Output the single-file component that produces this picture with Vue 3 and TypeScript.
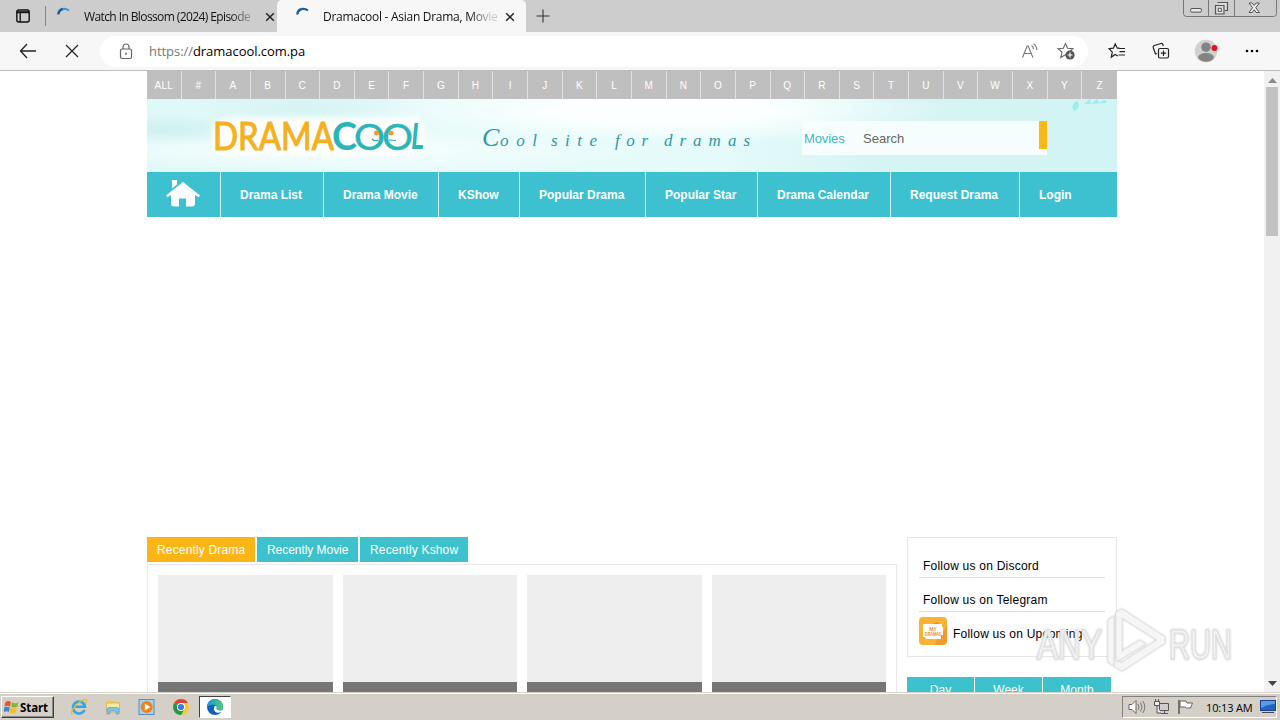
<script setup lang="ts">
interface NavItem { label: string }
interface Word { text: string; x: number; width: number; big?: boolean }

const letters: string[] = ['ALL', '#', ...'ABCDEFGHIJKLMNOPQRSTUVWXYZ'.split('')]
const nav: NavItem[] = [
  { label: 'Drama List' },
  { label: 'Drama Movie' },
  { label: 'KShow' },
  { label: 'Popular Drama' },
  { label: 'Popular Star' },
  { label: 'Drama Calendar' },
  { label: 'Request Drama' },
  { label: 'Login' },
]
const slogan: Word[] = [
  { text: 'C', x: 0, width: 14, big: true },
  { text: 'ool', x: 18, width: 37 },
  { text: 'site', x: 69, width: 46 },
  { text: 'for', x: 133, width: 33 },
  { text: 'dramas', x: 182, width: 86 },
]
const recent: string[] = ['Recently Drama', 'Recently Movie', 'Recently Kshow']
const periods: string[] = ['Day', 'Week', 'Month']
</script>

<template>
  <div class="screen">
    <header class="tabstrip">
      <svg class="tab-menu" width="16" height="16" viewBox="0 0 16 16">
        <rect x="1.8" y="2" width="12.4" height="12" rx="2" fill="none" stroke="#111" stroke-width="1.4" />
        <path d="M2 3.2h12v2H2z" fill="#111" /><path d="M5.200 5v9" stroke="#111" stroke-width="1.3" />
      </svg>
      <i class="strip-sep"></i>
      <div class="tab idle">
        <svg class="spinner" width="14" height="14" viewBox="0 0 14 14"><path d="M1.3 7.5A6 6 0 0 1 6 2" fill="none" stroke="#1d5c96" stroke-width="2.4" /><path d="M6 2Q9 1.2 12 3.5" fill="none" stroke="#3d9ad6" stroke-width="2.2" /></svg>
        <span class="tab-title t1">Watch In Blossom (2024) Episode</span>
        <svg class="close" width="10" height="10" viewBox="0 0 10 10"><path d="M1.2 1.2l7.6 7.6M8.8 1.2L1.2 8.8" stroke="#222" stroke-width="1.5" /></svg>
      </div>
      <div class="tab active">
        <svg class="spinner" width="14" height="14" viewBox="0 0 14 14"><path d="M1.3 7.5A6 6 0 0 1 6 2" fill="none" stroke="#1d5c96" stroke-width="2.4" /><path d="M6 2Q9 1.2 12 3.5" fill="none" stroke="#1d5c96" stroke-width="2.2" /></svg>
        <span class="tab-title t2">Dramacool - Asian Drama, Movie</span>
        <svg class="close" width="10" height="10" viewBox="0 0 10 10"><path d="M1.2 1.2l7.6 7.6M8.8 1.2L1.2 8.8" stroke="#222" stroke-width="1.5" /></svg>
      </div>
      <svg class="plus" width="14" height="14" viewBox="0 0 14 14"><path d="M7 .5v13M.5 7h13" stroke="#333" stroke-width="1.1" /></svg>
      <svg class="winbtns" width="94" height="17" viewBox="0 0 94 17">
        <path d="M.5 0V13.5Q.5 16.5 3.5 16.5H90.5Q93.5 16.5 93.5 13.5V0M25.5 0V16.5M51.5 0V16.5" fill="none" stroke="#777" />
        <rect x="7.500" y="8.500" width="11" height="3.6" rx="1.5" fill="#e8e8e8" stroke="#555" />
        <path d="M34.500 2.500h10v8h-2.500M32.500 5.500h8.500v8.500h-8.500z" fill="#ddd" stroke="#555" stroke-width="1.2" />
        <rect x="35.300" y="8.300" width="3" height="3" fill="#fff" stroke="#555" />
        <path d="M66 3h3.200l2 2.500 2-2.500h3.200l-3.600 4.700 3.600 4.800h-3.200l-2-2.700-2 2.700H66l3.600-4.800z" fill="#eee" stroke="#555" />
      </svg>
    </header>

    <div class="toolbar">
      <svg class="back" width="18" height="18" viewBox="0 0 18 18"><path d="M8 2L1.500 9 8 16M1.500 9H17" fill="none" stroke="#222" stroke-width="1.3" /></svg>
      <svg class="stop" width="14" height="14" viewBox="0 0 14 14"><path d="M1 1l12 12M13 1L1 13" fill="none" stroke="#222" stroke-width="1.2" /></svg>
      <div class="address">
        <svg class="lock" width="14" height="17" viewBox="0 0 14 17"><rect x="1.500" y="6" width="11" height="9.500" rx="1.500" fill="none" stroke="#666" stroke-width="1.200" /><path d="M4 6V4a3 3 0 0 1 6 0v2" fill="none" stroke="#666" stroke-width="1.200" /><circle cx="7" cy="10.800" r="1" fill="#666" /></svg>
        <span class="url"><span class="scheme">https://</span>dramacool.com.pa</span>
        <svg class="read" width="18" height="17" viewBox="0 0 18 17"><path d="M1.500 14.500L6.200 3h1l4.700 11.500M3.300 10.500h7M10.500 2.500q2 1 2 3.500M12.500 1q3.500 2 3.200 6" fill="none" stroke="#777" stroke-width="1.100" /></svg>
        <svg class="fav" width="18" height="18" viewBox="0 0 18 18"><path d="M8.500 1.500l2 4.700 5.400.5-3.800 3.300 1 5.500-4.600-2.900-4.700 2.900 1.200-5.500L1 6.700l5.300-.5z" fill="none" stroke="#666" stroke-width="1.100" /><circle cx="13" cy="13" r="4.600" fill="#555" /><path d="M13 10.500v5M10.500 13h5" stroke="#fff" stroke-width="1.200" /></svg>
      </div>
      <svg class="favs" width="18" height="18" viewBox="0 0 18 18"><path d="M11.500 6.200H9.300L7.200 2 5.400 6.200 1 6.700l3.300 3.400-1 5L7.200 12.500l2.600 1.600M11 6.500h6M11.500 9.700H17M10.500 13H17" fill="none" stroke="#222" stroke-width="1.200" /></svg>
      <svg class="coll" width="18" height="18" viewBox="0 0 18 18"><path d="M5 11.500L3.500 12 1.200 5.500Q.8 4 2.300 3.500L9 1.500q1.300-.3 1.800 1l.5 1.500" fill="none" stroke="#222" stroke-width="1.200" /><rect x="6.500" y="6.500" width="10" height="9.500" rx="1.500" fill="none" stroke="#222" stroke-width="1.200" /><path d="M11.500 8.500v5.500M8.800 11.200h5.400" stroke="#222" stroke-width="1.200" /></svg>
      <svg class="avatar" width="24" height="24" viewBox="0 0 24 24"><circle cx="12" cy="12" r="11.300" fill="#d1d1cf" /><circle cx="12" cy="8.200" r="4.800" fill="#848484" /><path d="M4 18.500q1-4.500 8-4.500t8 4.500q-2.500 4.300-8 4.300t-8-4.300" fill="#848484" /><circle cx="20.500" cy="9" r="3" fill="#e21020" /></svg>
      <svg class="dots" width="14" height="4" viewBox="0 0 14 4"><circle cx="2" cy="2" r="1.300" /><circle cx="7" cy="2" r="1.300" /><circle cx="12" cy="2" r="1.300" /></svg>
    </div>

    <div class="viewport">
      <main class="site">
        <nav class="alphabet"><a v-for="l in letters" :key="l">{{ l }}</a></nav>
        <div class="banner">
          <svg class="logo" width="224" height="52" viewBox="0 0 224 52">
            <g class="logo-halo"><rect x="4" y="8" width="212" height="37" rx="12" /></g>
            <g class="logo-text">
              <text x="4" y="40" textLength="121" lengthAdjust="spacingAndGlyphs" class="drama">DRAMA</text>
              <text x="123" y="39.800" textLength="25" lengthAdjust="spacingAndGlyphs" class="cool">C</text>
              <text x="145" y="39.800" textLength="31" lengthAdjust="spacingAndGlyphs" class="cool oo">O</text>
              <text x="173" y="39.800" textLength="31" lengthAdjust="spacingAndGlyphs" class="cool oo">O</text>
              <text x="202" y="39" textLength="13" lengthAdjust="spacingAndGlyphs" class="cool ell">L</text>
            </g>
            <circle cx="167.500" cy="23" r="2.500" fill="#f39a2a" /><circle cx="182" cy="23" r="2.500" fill="#f39a2a" />
            <path d="M163 29q3 3 6 1M180 30l7 .5" fill="none" stroke="#2b9fb5" stroke-width="1.100" />
          </svg>
          <svg class="tagline" width="272" height="40" viewBox="0 0 272 40">
            <text v-for="w in slogan" :key="w.text" :x="w.x" y="28" :textLength="w.width" :class="{ big: w.big }">{{ w.text }}</text>
          </svg>
          <form class="search">
            <span class="kind">Movies</span><span class="query">Search</span><i></i>
          </form>
          <svg class="leaves" width="44" height="16" viewBox="0 0 44 16"><path d="M5 4q4-4 5 1 0 5-5 7-3-4 0-8M15 5l6-5 1 5 6-5 2 4 6-3 2 3" fill="#8eeaea" opacity=".8" /></svg>
        </div>
        <nav class="mainnav">
          <a class="home"><svg width="34" height="28" viewBox="0 0 34 28"><path d="M17 2L0 15.500l1.500 1.800L5 15V24q0 2.500 3 2.500h5v-8h7v8h6q3 0 3-3V15l3.500 2.300L34 15.500zM6 8.500V0h5v4.500z" fill="#fff" /></svg></a>
          <a v-for="n in nav" :key="n.label">{{ n.label }}</a>
        </nav>
        <div class="columns">
          <section class="left">
            <div class="recent"><a v-for="(r, i) in recent" :key="r" :class="{ on: i === 0 }">{{ r }}</a></div>
            <div class="grid"><div v-for="n in 4" :key="n" class="card"><b></b></div></div>
          </section>
          <aside class="right">
            <div class="follow">
              <p>Follow us on Discord</p>
              <p>Follow us on Telegram</p>
              <p class="up">
                <svg width="28" height="28" viewBox="0 0 28 28"><rect width="28" height="28" rx="4" fill="#f9b233" /><path d="M28 9L15 27.500h9q4 0 4-4z" fill="#f39a2c" /><path d="M14 7q3-3 6-1l2 3H14" fill="#f08d24" /><path d="M4 7h19v3h1v8h-2v4H7l-1-2H4z" fill="#fff" /><text x="14" y="13.500" class="tiny">MY</text><text x="14" y="18.500" class="tiny" textLength="16" lengthAdjust="spacingAndGlyphs">DRAMAS</text></svg>
                Follow us on Upcoming
              </p>
            </div>
            <div class="periods"><a v-for="p in periods" :key="p">{{ p }}</a></div>
          </aside>
        </div>
      </main>
      <div class="scrollbar">
        <svg width="9" height="5" viewBox="0 0 9 5"><path d="M0 5L4.500 0 9 5z" fill="#8a8a8a" /></svg>
        <i></i>
        <svg class="down" width="9" height="5" viewBox="0 0 9 5"><path d="M0 0L4.500 5 9 0z" fill="#444" /></svg>
      </div>
    </div>

    <footer class="taskbar">
      <div class="start">
        <svg width="15" height="14" viewBox="0 0 15 14"><path d="M1.500 2q3-2 5.500 0L6 6.500Q3.500 5 .5 6.500z" fill="#e8542c" /><path d="M8 2.300q3 1.700 6.500 0l-1.300 4.500q-3 1.500-6 0z" fill="#7cb83b" /><path d="M.3 7.500q3-1.500 5.500 0l-1 4.500Q2.500 10.500-.5 12z" fill="#3b86cf" /><path d="M6.700 7.800q3 1.600 6.200 0l-1.300 4.700q-3 1.500-6 0z" fill="#f7bb26" /></svg>
        <span>Start</span>
      </div>
      <svg class="ie" width="18" height="18" viewBox="0 0 18 18"><path d="M14.500 12A6 6 0 1 1 15 8.800H5" fill="none" stroke="#35a5e0" stroke-width="2.600" /><path d="M2.500 16.500Q-.5 15 5 8.500 12 1 16 1.500q1.500.8 0 4" fill="none" stroke="#e9b92f" stroke-width="1.200" /></svg>
      <svg class="folder" width="18" height="18" viewBox="0 0 18 18"><path d="M1.500 3.500L3 2h5l1 1.500h6V9H1.500z" fill="#e9cf70" /><path d="M2.500 5h13v9h-13z" fill="#f8e9a1" stroke="#c9ab52" stroke-width=".7" /><path d="M3 16v-4.500Q3 9.500 5 9.500h8q2 0 2 2V16h-3v-3H6v3z" fill="#7fc3e6" stroke="#4c99c8" stroke-width=".6" /></svg>
      <svg class="wmp" width="18" height="18" viewBox="0 0 18 18"><rect x="1" y="1.500" width="15" height="15" fill="#a9d1ee" stroke="#4d91c7" /><circle cx="8.700" cy="9" r="6" fill="#f08218" /><path d="M6.800 5.500l5.500 3.500-5.500 3.500z" fill="#fff" /></svg>
      <svg class="chrome" width="18" height="18" viewBox="0 0 18 18"><circle cx="9" cy="9" r="8" fill="#f7c92e" /><path d="M9 9L2.100 5A8 8 0 0 1 16 5H9z" fill="#dc4437" /><path d="M2.100 5A8 8 0 0 0 9 17l3.500-6L9 9z" fill="#26964d" /><circle cx="9" cy="9" r="4" fill="#fff" /><circle cx="9" cy="9" r="3.100" fill="#3b7be8" /></svg>
      <div class="edge">
        <svg width="18" height="18" viewBox="0 0 18 18"><defs><linearGradient id="eg" x1="0" y1="0" x2="1" y2="0"><stop offset="0" stop-color="#1b93dc" /><stop offset="1" stop-color="#4fd16c" /></linearGradient></defs><circle cx="9" cy="9" r="8" fill="#0c62b8" /><path d="M1 9.500A8 8 0 0 1 17 9q0 3-3.500 3.200-3.500 0-3-2Q11 7 7.500 6.500 2.500 6.500 1 9.500" fill="url(#eg)" /><path d="M10.700 9q-.8 1.500.3 2.700 2.500 1.300 6 .3l-1 1.700q-4 2.300-7.200-.2Q7 11 8.500 8.300q1.500-.8 2.200.7" fill="#fff" /></svg>
      </div>
      <div class="tray">
        <svg class="snd" width="18" height="16" viewBox="0 0 18 16"><path d="M1 5.500h3L8 1.500v13L4 10.500H1z" fill="#fff" stroke="#666" /><path d="M10 5q2 3 0 6M12.500 3.500q3 4.500 0 9M14.800 2q4 6 0 12" fill="none" stroke="#777" /></svg>
        <svg class="net" width="18" height="16" viewBox="0 0 18 16"><path d="M6.500 4.500h9v7h-9zM8 14.500h7M11.500 12v2" fill="#ccc" stroke="#555" /><path d="M1.500 2.500h5v4h-5zM2.500 0v2M5.500 0v2M4 7v7h4" fill="#eee" stroke="#555" /></svg>
        <svg class="flag" width="17" height="16" viewBox="0 0 17 16"><path d="M2 1v14" stroke="#555" stroke-width="1.500" /><path d="M3 2h6l1 2h5.500l-2 5H9.500L8 8H3z" fill="#fff" stroke="#666" /></svg>
        <time>10:13 AM</time>
        <svg class="mon" width="16" height="14" viewBox="0 0 16 14"><rect x=".5" y=".5" width="15" height="10" fill="#2363c4" stroke="#17418a" /><path d="M1 1h14v3Q7 4 1 8z" fill="#5b9be8" /><path d="M2 12.500h12" stroke="#445" /></svg>
      </div>
    </footer>

    <svg class="watermark" width="200" height="68" viewBox="0 0 200 68">
      <g class="wm">
        <text x="3" y="53" textLength="65" lengthAdjust="spacingAndGlyphs">ANY</text>
        <text x="135" y="53" textLength="63" lengthAdjust="spacingAndGlyphs">RUN</text>
        <path d="M74 14l6-4v50l-6-4zM82 6l6-3 43 28v6L88 65l-8-5v-8l7 5 36-23L88 12v33l18-11 6 4-30 18z" />
      </g>
    </svg>
  </div>
</template>

<style>
html, body { margin: 0; overflow: hidden; }
</style>
<style scoped>
* { box-sizing: border-box; }
svg { display: block; flex: none; }
.screen { position: relative; width: 1280px; height: 720px; overflow: hidden; display: flex; flex-direction: column; background: #fff; font-family: "Liberation Sans", Arial, sans-serif; white-space: nowrap; }
.tabstrip { height: 32px; flex: none; background: #cdcdcd; display: flex; align-items: center; font: 12px "Open Sans", sans-serif; color: #111; }
.tab-menu { margin-left: 15px; }
.strip-sep { width: 1px; height: 20px; background: #888; margin-left: 14px; }
.tab { height: 32px; display: flex; align-items: center; flex: none; }
.idle { width: 231px; padding-left: 11px; }
.active { width: 249px; padding-left: 19px; background: #f7f7f7; border-radius: 5px 5px 0 0; }
.spinner { margin-top: -4px; }
.tab-title { flex: none; width: 174px; margin-left: 13px; overflow: hidden; -webkit-mask-image: linear-gradient(90deg, #000 146px, rgba(0,0,0,.2) 168px); mask-image: linear-gradient(90deg, #000 146px, rgba(0,0,0,.2) 168px); }
.t1 { letter-spacing: -.6px; }
.t2 { letter-spacing: -.28px; }
.close { margin: 1px 0 0 8px; }
.idle .close { margin-left: 7px; }
.plus { margin-left: 10px; }
.winbtns { margin-left: auto; margin-right: 3px; align-self: flex-start; }
.toolbar { height: 39px; flex: none; background: #f7f7f7; border-bottom: 1px solid #bdbdbd; display: flex; align-items: center; }
.back { margin-left: 19px; }
.stop { margin-left: 28px; }
.address { width: 988px; height: 31px; margin-left: 21px; border-radius: 16px; background: #fff; display: flex; align-items: center; padding-left: 19px; }
.url { margin-left: 16px; width: 200px; font: 13px "Open Sans", sans-serif; letter-spacing: -.05px; color: #000; }
.scheme { color: #777; }
.read { margin-left: 672px; }
.fav { margin-left: 18px; }
.favs { margin-left: 20px; }
.coll { margin-left: 26px; }
.avatar { margin-left: 24px; }
.dots { margin-left: 27px; }
.viewport { height: 621px; flex: none; display: flex; overflow: hidden; }
.site { width: 970px; margin-left: 147px; flex: none; }
.alphabet { height: 28px; display: grid; grid-template-columns: repeat(28, 1fr); background: #bfbfbf; color: #fff; font-size: 10px; letter-spacing: .3px; line-height: 29px; text-align: center; }
.alphabet a { border-right: 1px solid #e2e2e2; }
.alphabet a:last-child { border: 0; }
.banner { height: 73px; position: relative; display: flex; background: radial-gradient(ellipse 9% 22% at 2% 42%, rgba(190,232,232,.5), transparent), radial-gradient(ellipse 12% 30% at 16% 12%, rgba(205,240,240,.6), transparent), radial-gradient(ellipse at 20% 70%, #f3fdfd 0 8%, transparent 32%), radial-gradient(ellipse at 53% 15%, #fbffff 0 15%, transparent 40%), linear-gradient(90deg, #dff8f8 0, #e5fafa 30%, #e5fafa 60%, #d6f4f4 75%, #d3f4f4); }
.logo { margin: 11px 0 0 62px; }
.logo-halo { fill: #fff; filter: blur(3px); }
.drama { font: 400 38px Lato, sans-serif; fill: #f5b01f; stroke: #f5b01f; stroke-width: 1.100px; stroke-linejoin: round; }
.cool { font: 700 37.500px Lato, sans-serif; fill: #2bb5b8; }
.oo { font-weight: 400; stroke: #2bb5b8; stroke-width: .5px; }
.ell { font: italic 700 37px Lato, sans-serif; }
.tagline { margin: 19px 0 0 49px; overflow: visible; }
.tagline text { font: italic 17px "Liberation Serif", serif; fill: #2f989f; }
.tagline .big { font-size: 26px; }
.search { width: 245px; height: 34px; margin: 22px 0 0 48px; background: #f6fdfd; display: flex; font-size: 13px; line-height: 35px; }
.kind { width: 61px; padding-left: 2px; color: #43b5c4; letter-spacing: -.1px; }
.query { flex: 1; color: #666; letter-spacing: 0; }
.search i { width: 8px; height: 28px; background: #fdb813; }
.leaves { position: absolute; right: 4px; top: 0; }
.mainnav { height: 45px; background: #3dc1d0; display: grid; grid-template-columns: 74px 103px 115px 81px 126px 112px 133px 129px 1fr; color: #fff; font-size: 12px; font-weight: 700; line-height: 46px; }
.mainnav a { padding-left: 19px; border-right: 1px solid #d3f1f4; }
.mainnav a:last-child { border: 0; }
.home svg { margin-top: 8px; }
.columns { margin-top: 320px; display: flex; justify-content: space-between; }
.left { width: 750px; }
.recent { display: flex; gap: 2px; height: 25px; font-size: 12px; letter-spacing: .16px; line-height: 26px; color: #fff; }
.recent a { width: 108px; padding-left: 10px; background: #3dc1cc; }
.recent a:nth-child(2) { width: 101px; letter-spacing: -.05px; }
.recent a.on { background: #fdb515; }
.grid { margin-top: 2px; height: 160px; border: 1px solid #ebe6ea; padding: 10px; display: grid; grid-template-columns: 175px 174px 175px 174px; gap: 10px; }
.card { height: 160px; background: #eee; padding-top: 107px; }
.card b { display: block; height: 60px; background: #767676; }
.right { width: 210px; }
.follow { height: 120px; border: 1px solid #e6e6e6; padding: 6px 11px; }
.follow p { margin: 0; height: 34px; line-height: 44px; padding-left: 4px; border-bottom: 1px solid #ddd; font-size: 12px; letter-spacing: .23px; color: #000; }
.follow .up { padding: 0; border: 0; display: flex; gap: 6px; }
.up svg { margin-top: 5px; }
.tiny { font: 700 5px "Liberation Sans", sans-serif; letter-spacing: 0; fill: #f18a2b; text-anchor: middle; }
.periods { margin-top: 20px; width: 204px; height: 28px; display: grid; grid-template-columns: 67px 67px 68px; gap: 1px; color: #fff; font-size: 12px; letter-spacing: 0; line-height: 26px; text-align: center; }
.periods a { background: #3dc1cc; }
.scrollbar { width: 16px; height: 621px; margin-left: auto; background: #f1f1f1; display: flex; flex-direction: column; align-items: center; padding-top: 7px; }
.scrollbar i { width: 12px; height: 149px; margin-top: 4px; background: #c1c1c1; }
.down { margin-top: auto; margin-bottom: 6px; }
.taskbar { height: 28px; flex: none; background: #d4cfc7; box-shadow: inset 0 1px #d4cfc7, inset 0 2px #fff; display: flex; align-items: center; padding-top: 2px; }
.start { width: 53px; height: 22px; margin-left: 1px; border: 1px solid; border-color: #fff #404040 #404040 #fff; box-shadow: inset -1px -1px #888; display: flex; align-items: center; padding-left: 2px; }
.start span { font: 700 11.500px "Open Sans", sans-serif; letter-spacing: -.1px; margin-left: 1px; color: #000; }
.ie { margin-left: 16px; }
.folder, .wmp, .chrome { margin-left: 16px; }
.edge { width: 32px; height: 22px; margin-left: 9px; background: #fff; border: 1px solid; border-color: #404040 #fff #fff #404040; padding: 1px 0 0 6px; }
.tray { width: 155px; height: 22px; margin-left: auto; margin-right: 3px; border: 1px solid; border-color: #808080 #fff #fff #808080; display: flex; align-items: center; padding-left: 5px; }
.net { margin-left: 7px; }
.flag { margin-left: 6px; }
.tray time { margin-left: 12px; width: 54px; font: 11px "Open Sans", sans-serif; letter-spacing: -.15px; color: #000; }
.watermark { position: absolute; left: 1034px; top: 606px; }
.wm { fill: rgba(255,255,255,.75); stroke: #e2e2e2; stroke-width: 1px; stroke-linejoin: round; filter: drop-shadow(0 0 1px #c8c8c8); }
.wm text { font: 400 42px "Liberation Sans", sans-serif; stroke-width: 1.500px; }
.wm path { fill: rgba(255,255,255,.8); }
</style>
